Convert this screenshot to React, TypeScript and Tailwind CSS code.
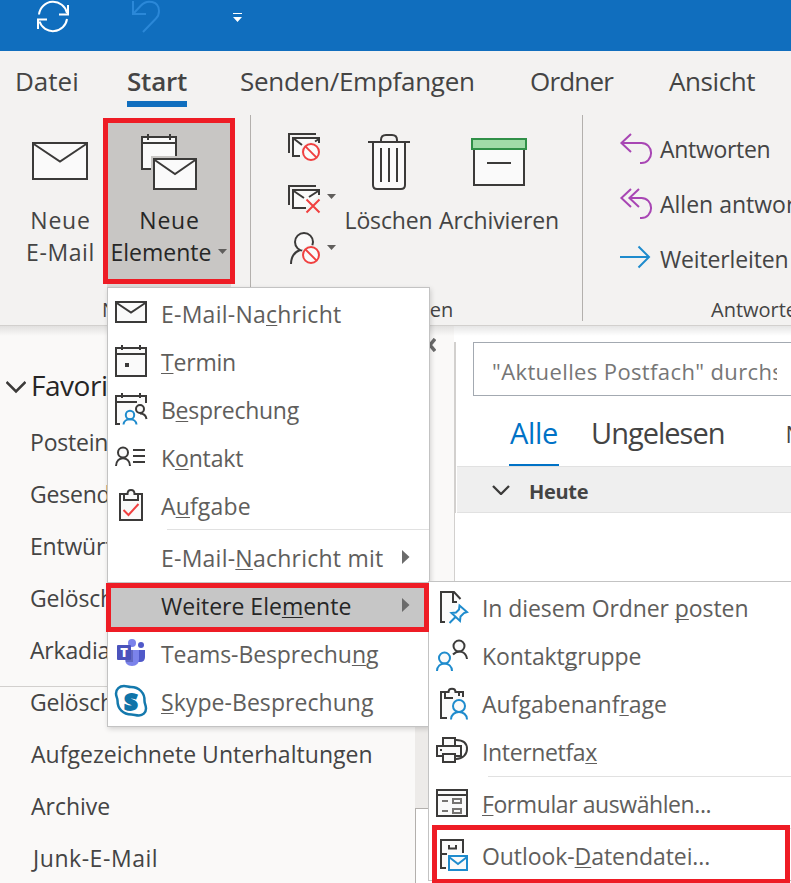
import { ReactNode } from 'react';
import clsx from 'clsx';

const DARK = '#3b3a39';
const BLUE = '#1e8bcd';
const RED = '#f04040';
const PURPLE = '#a846b4';

interface IconProps {
  children: ReactNode;
  w?: number;
  h?: number;
  className?: string;
}

const Icon = ({ children, w = 32, h = 32, className }: IconProps) => (
  <svg
    width={w}
    height={h}
    viewBox={`0 0 ${w} ${h}`}
    fill="none"
    stroke={DARK}
    strokeWidth={2}
    className={clsx('block shrink-0 overflow-visible', className)}
  >
    {children}
  </svg>
);

const DownArrow = ({ className }: { className?: string }) => (
  <svg width="9" height="5" viewBox="0 0 9 5" className={clsx('block shrink-0', className)}>
    <path d="M0 0H9L4.500 5Z" fill="#605e5c" />
  </svg>
);

/* ---------- ribbon icons ---------- */

const NewMailIcon = () => (
  <Icon w={56} h={56}>
    <rect x="1" y="9" width="54" height="36" fill="#fafafa" />
    <path d="M1 9.500L28 27.500L55 9.500" />
  </Icon>
);

const NewItemsIcon = () => (
  <Icon w={56} h={56}>
    <rect x="1" y="3" width="34" height="32" fill="#fafafa" />
    <path d="M1 9H35M7 0V6M29 0V6" />
    <rect x="10" y="22" width="48" height="36" fill="#c8c6c4" stroke="none" />
    <rect x="13" y="25" width="42" height="30" fill="#fafafa" />
    <path d="M13 25.500L34 40L55 25.500" />
  </Icon>
);

const TrashIcon = () => (
  <Icon w={42} h={56}>
    <path d="M5 8V51Q5 55 9 55H33Q37 55 37 51V8" fill="#fafafa" />
    <path d="M0 8H42M13 8V6Q13 1 18 1H24Q29 1 29 6V8M13 14V48M21 14V48M29 14V48" />
  </Icon>
);

const ArchiveIcon = () => (
  <Icon w={56} h={56}>
    <rect x="3" y="10" width="50" height="41" fill="#fafafa" />
    <rect x="1" y="5" width="54" height="10" fill="#a0dca8" stroke="#309048" />
    <path d="M16 29H40" />
  </Icon>
);

const Blocked = ({ cx, cy }: { cx: number; cy: number }) => (
  <>
    <circle cx={cx} cy={cy} r="10" fill="#f3f2f1" stroke="none" />
    <circle cx={cx} cy={cy} r="8" fill="#fafafa" stroke={RED} />
    <path d={`M${cx - 5.6} ${cy - 5.6}L${cx + 5.6} ${cy + 5.6}`} stroke={RED} />
  </>
);

const IgnoreIcon = () => (
  <Icon>
    <path d="M28 1H1V20" />
    <path d="M12 23H5V5H31V10" fill="#fafafa" />
    <path d="M5 5L14 12M27 8.500L31 6" />
    <Blocked cx={23} cy={19} />
  </Icon>
);

const CleanUpIcon = () => (
  <Icon>
    <path d="M28 1H1V20" />
    <path d="M18 23H5V5H31V10" fill="#fafafa" />
    <path d="M5 5.500L16 13M21 12L31 5.500" />
    <path d="M18.500 14.500L31.500 27.500M31.500 14.500L18.500 27.500" stroke={RED} />
  </Icon>
);

const JunkIcon = () => (
  <Icon>
    <circle cx="16" cy="10" r="9" fill="#fafafa" />
    <path d="M3 32C3 24 7 20 12 18" />
    <Blocked cx={23} cy={23} />
  </Icon>
);

const ReplyIcon = () => (
  <Icon>
    <path d="M11 1L1.400 10L11 19M1 10H21.500A9.600 10 0 0 1 21.500 30H20" stroke={PURPLE} />
  </Icon>
);

const ReplyAllIcon = () => (
  <Icon>
    <path d="M11 1L1.400 10L11 19M19 1L9.400 10L19 19M9 10H21.500A9.600 10 0 0 1 21.500 30H20" stroke={PURPLE} />
  </Icon>
);

const ForwardIcon = () => (
  <Icon>
    <path d="M0 14H29M18.500 3.500L29 14L18.500 24.500" stroke={BLUE} />
  </Icon>
);

/* ---------- menu icons ---------- */

const MailIcon = () => (
  <Icon>
    <rect x="1" y="6" width="30" height="20" fill="#fafafa" />
    <path d="M1 6.500L16 16.500L31 6.500" />
  </Icon>
);

const CalendarIcon = () => (
  <Icon>
    <rect x="1" y="4" width="30" height="28" fill="#fafafa" />
    <path d="M1 10H31M7 1V6M25 1V6" />
    <rect x="10" y="19" width="4" height="4" fill={DARK} stroke="none" />
  </Icon>
);

const MeetingIcon = () => (
  <Icon>
    <path d="M1 4H31V12H20L8 32H1Z" fill="#fafafa" stroke="none" />
    <path d="M5 32H1V4H31V11M1 10H22M7 1V6M25 1V6" />
    <circle cx="25" cy="17" r="4" fill="#fafafa" />
    <path d="M25 21.500C29 21.500 31 24 31.500 27" />
    <circle cx="15" cy="23" r="4.200" fill="#fafafa" stroke={BLUE} />
    <path d="M8.500 32.500C9 25.500 21 25.500 21.500 32.500" stroke={BLUE} />
  </Icon>
);

const ContactIcon = () => (
  <Icon>
    <circle cx="8" cy="12.500" r="5" fill="#fafafa" />
    <path d="M1 26C1 15.500 15 15.500 15 26M18 10H30M18 16H30M18 22H30" />
  </Icon>
);

const TaskIcon = () => (
  <Icon>
    <rect x="5" y="6" width="22" height="26" fill="#fafafa" />
    <path d="M9 6V12H23V6H19.500C19.500 0.500 12.500 0.500 12.500 6Z" fill="#fafafa" />
    <path d="M8.500 22L13.500 27L23.500 16" stroke={RED} />
  </Icon>
);

const TeamsIcon = () => (
  <Icon>
    <g stroke="none">
      <circle cx="26" cy="9" r="3" fill="#5059c9" />
      <circle cx="17" cy="7" r="4" fill="#7b83eb" />
      <path d="M22 14H30V21Q30 26 25 26H22Z" fill="#5059c9" />
      <path d="M10 14H24V23Q24 30 17 30Q10 30 10 23Z" fill="#7b83eb" />
      <path d="M10 14H18V26H11Z" fill="#444791" opacity="0.450" />
      <rect x="2" y="9" width="14" height="15" rx="1" fill="#4b53bc" />
      <text x="9" y="21" textAnchor="middle" fill="#fff" fontSize="13" fontWeight="800" fontFamily="Open Sans, sans-serif">
        T
      </text>
    </g>
  </Icon>
);

const SkypeIcon = () => (
  <Icon>
    <path
      d="M9 2C12 2 13 3 16 3C24 3 30 9 29.500 17C29.500 20 31 21 31 24.500C31 29 27.500 31.500 24 31.500C20.500 31.500 19.500 30.500 16.500 30.500C8 30.500 2.500 25 2.500 16.500C2.500 14 1 12.500 1 9.500C1 5 4.500 2 9 2Z"
      fill="#fff"
      stroke="#1479ad"
      strokeWidth="2.500"
    />
    <text x="16" y="25.500" textAnchor="middle" fill="#0f74a8" stroke="#0f74a8" strokeWidth="1.800" fontSize="23" fontWeight="800" fontFamily="Open Sans, sans-serif">
      S
    </text>
  </Icon>
);

const PostIcon = () => (
  <Icon>
    <path d="M5 1H18L24 8L12 32H5Z" fill="#fafafa" stroke="none" />
    <path d="M9 31H5V1H18L24.500 8M17 1V11H21" />
    <path
      d="M23.500 14.500L31 21L28 22L24.500 25.500L24 30L15.500 22L20 21.500L23 18.500ZM19.500 26L13.500 32"
      fill="#fafafa"
      stroke={BLUE}
    />
  </Icon>
);

const ContactGroupIcon = () => (
  <Icon>
    <circle cx="23" cy="7" r="5.500" fill="#fafafa" />
    <path d="M17 15.500C22 10.500 30 12 31 20" />
    <circle cx="8.500" cy="19" r="5.500" fill="#fafafa" stroke={BLUE} />
    <path d="M1 32C1 22 16 22 16 32" stroke={BLUE} />
  </Icon>
);

const TaskRequestIcon = () => (
  <Icon>
    <path d="M5 5H27V12L14 32H5Z" fill="#fafafa" stroke="none" />
    <path d="M11 31H5V5H12.500C12.500 0.500 19.500 0.500 19.500 5H27V10M9 5V11H17M23 5V9" />
    <circle cx="23" cy="19" r="6" fill="#fafafa" stroke={BLUE} />
    <path d="M15 32.500C15 22.500 31 22.500 31 32.500" stroke={BLUE} />
  </Icon>
);

const FaxIcon = () => (
  <Icon>
    <path d="M20 5C28 5 31 9 31 14C31 19 27 24 20 24" />
    <rect x="7" y="3" width="12" height="8" fill="#fafafa" />
    <rect x="1" y="11" width="24" height="10" fill="#fafafa" />
    <rect x="7" y="19" width="12" height="8" fill="#fafafa" />
    <rect x="4" y="14" width="2" height="2" fill={DARK} stroke="none" />
  </Icon>
);

const FormIcon = () => (
  <Icon>
    <rect x="1" y="3" width="30" height="26" fill="#fafafa" />
    <path d="M1 8H31" />
    <path d="M6 14H12M6 24H12" stroke="#767472" />
    <rect x="17" y="12" width="8" height="4" stroke="#767472" />
    <rect x="17" y="22" width="8" height="4" stroke="#767472" />
  </Icon>
);

const DataFileIcon = () => (
  <Icon>
    <path d="M5 1H27V15H11V29H5Z" fill="#fafafa" stroke="none" />
    <path d="M10 29H5V1H27V14M5 15H11M13 6V9.500H20V6" />
    <rect x="13" y="17" width="18" height="14" fill="#fafafa" stroke={BLUE} />
    <path d="M13 18L22 25L31 18" stroke={BLUE} />
  </Icon>
);

/* ---------- menus ---------- */

interface MenuItemProps {
  icon?: ReactNode;
  children: ReactNode;
  className?: string;
  selected?: boolean;
  hasSub?: boolean;
}

const MenuItem = ({ icon, children, className, selected, hasSub }: MenuItemProps) => (
  <div
    className={clsx(
      'flex h-12 shrink-0 pl-[7px] text-[23px] whitespace-nowrap',
      selected ? 'bg-[#c6c6c6] text-[#262626]' : 'text-[#605e5c]'
    )}
  >
    <div className="mt-[6px] mr-[14px] h-8 w-8 shrink-0">{icon}</div>
    <span className={className}>{children}</span>
    {hasSub && (
      <svg width="8" height="14" viewBox="0 0 8 14" className="mt-[16px] mr-[19px] ml-auto block">
        <path d="M0 0L7.500 7L0 14Z" fill="#6b6b6b" />
      </svg>
    )}
  </div>
);

const Key = ({ children }: { children: string }) => (
  <span className="underline decoration-1 underline-offset-[2px] [text-decoration-skip-ink:none]">{children}</span>
);

const MenuLine = () => <div className="mt-[-1px] mb-1 ml-[59px] h-px shrink-0 bg-[#e1e1e1]" />;

const NewItemsMenu = () => (
  <div className="absolute top-[287px] left-[107px] flex h-[440px] w-[323px] flex-col border border-[#c3c3c3] bg-white pt-[2px] leading-[48px] shadow-[1px_2px_5px_rgba(0,0,0,0.16)]">
    <MenuItem icon={<MailIcon />} className="tracking-[0.25px]">E-Mail-Na<Key>c</Key>hricht</MenuItem>
    <MenuItem icon={<CalendarIcon />} className="tracking-[-0.2px]"><Key>T</Key>ermin</MenuItem>
    <MenuItem icon={<MeetingIcon />} className="tracking-[-0.28px]">B<Key>e</Key>sprechung</MenuItem>
    <MenuItem icon={<ContactIcon />} className="tracking-[-0.15px]">K<Key>o</Key>ntakt</MenuItem>
    <MenuItem icon={<TaskIcon />} className="tracking-[0.15px]">A<Key>u</Key>fgabe</MenuItem>
    <MenuLine />
    <MenuItem hasSub className="tracking-[0.24px]">E-Mail-<Key>N</Key>achricht mit</MenuItem>
    <MenuItem selected hasSub>Weitere Ele<Key>m</Key>ente</MenuItem>
    <MenuItem icon={<TeamsIcon />} className="tracking-[-0.1px]">Teams-Besprechu<Key>n</Key>g</MenuItem>
    <MenuItem icon={<SkypeIcon />} className="tracking-[0.06px]"><Key>S</Key>kype-Besprechung</MenuItem>
  </div>
);

const MoreItemsMenu = () => (
  <div className="absolute top-[581px] left-[428px] flex h-[300px] w-[380px] flex-col border border-[#c3c3c3] bg-white pt-[3px] leading-[46px]">
    <MenuItem icon={<PostIcon />} className="tracking-[-0.08px]">In diesem Ordner <Key>p</Key>osten</MenuItem>
    <MenuItem icon={<ContactGroupIcon />} className="tracking-[-0.08px]">Kontakt<Key>g</Key>ruppe</MenuItem>
    <MenuItem icon={<TaskRequestIcon />}>Aufgabenanf<Key>r</Key>age</MenuItem>
    <MenuItem icon={<FaxIcon />} className="tracking-[-0.35px]">Internetfa<Key>x</Key></MenuItem>
    <MenuLine />
    <MenuItem icon={<FormIcon />} className="tracking-[-0.42px]"><Key>F</Key>ormular auswählen...</MenuItem>
    <MenuLine />
    <MenuItem icon={<DataFileIcon />} className="tracking-[-0.07px]">Outlook-<Key>D</Key>atendatei...</MenuItem>
  </div>
);

/* ---------- window parts ---------- */

const TitleBar = () => (
  <div className="flex h-[51px] shrink-0 bg-[#106ebe]">
    <Icon className="mt-[1px] ml-[37px]">
      <g stroke="#fff">
        <path d="M2 13.500A14.200 14.200 0 0 1 30 12M31 4V13.500H22" />
        <path d="M30 18A14.200 14.200 0 0 1 2.500 20.500M1 28V18.500H10" />
      </g>
    </Icon>
    <Icon className="ml-[63px]">
      <path d="M1 1V14H14M1 14L9 5.500C15 -1 27 1 27 11C27 14.500 26 16.500 24 18.500L11 32" stroke="#2b88d8" />
    </Icon>
    <svg width="9" height="10" viewBox="0 0 9 10" className="mt-[13px] ml-[69px]">
      <path d="M0 0H9V1H0ZM0 4H9L4.500 9Z" fill="#fff" />
    </svg>
  </div>
);

const Tabs = () => (
  <div className="flex h-[56px] shrink-0 pl-[15px] text-[26px] leading-[39px] text-[#444]">
    <div className="w-[112px] pt-[11px]">Datei</div>
    <div className="w-[113px]">
      <div className="h-[56px] w-[60px] border-b-[6px] border-[#106ebe] pt-[11px] font-semibold tracking-[-0.2px]">Start</div>
    </div>
    <div className="w-[290px] pt-[11px] tracking-[-0.27px]">Senden/Empfangen</div>
    <div className="w-[139px] pt-[11px] tracking-[-0.8px]">Ordner</div>
    <div className="pt-[11px] tracking-[-0.4px]">Ansicht</div>
  </div>
);

const Separator = () => <div className="mt-2 h-[206px] w-px shrink-0 bg-[#b3b0ad]" />;

const Ribbon = () => (
  <div className="flex h-[219px] shrink-0 border-b border-[#d2d0ce] text-[23px] leading-8 whitespace-nowrap text-[#444]">
    <div className="w-[250px] shrink-0">
      <div className="flex pt-[11px] pl-[17px]">
        <div className="flex h-[166px] w-[86px] flex-col items-center pt-[16px]">
          <NewMailIcon />
          <span className="mt-[14px] ml-[1px] tracking-[0.8px]">Neue</span>
          <span className="ml-[1px] tracking-[0.6px]">E-Mail</span>
        </div>
        <div className="flex h-[166px] w-[132px] flex-col items-center border-[5px] border-[#ee1c25] bg-[#c8c6c4] pt-[11px] text-[#262626]">
          <NewItemsIcon />
          <span className="mt-[14px] ml-[1px] tracking-[0.8px]">Neue</span>
          <div className="flex items-center gap-[7px]">
            <span>Elemente</span>
            <DownArrow className="mt-[-2px]" />
          </div>
        </div>
      </div>
      <div className="mt-[16px] pl-[102px] text-[20px] leading-[20px]">Neu</div>
    </div>
    <Separator />
    <div className="w-[331px] shrink-0">
      <div className="flex h-[177px] pl-[37px]">
        <div className="flex w-[54px] flex-col pt-[26px]">
          <IgnoreIcon />
          <div className="mt-5 flex gap-[7px]">
            <CleanUpIcon />
            <DownArrow className="mt-[9px]" />
          </div>
          <div className="mt-[15px] flex gap-[7px]">
            <JunkIcon />
            <DownArrow className="mt-[13px]" />
          </div>
        </div>
        <div className="flex w-[93px] flex-col items-center pt-[27px]">
          <TrashIcon />
          <span className="mt-[14px] tracking-[-0.14px]">Löschen</span>
        </div>
        <div className="flex w-[128px] flex-col items-center pt-[27px]">
          <ArchiveIcon />
          <span className="mt-[14px] tracking-[-0.14px]">Archivieren</span>
        </div>
      </div>
      <div className="mt-[16px] pl-[125px] text-[20px] leading-[20px]">Löschen</div>
    </div>
    <Separator />
    <div className="shrink-0 pl-[37px]">
      <div className="flex h-[193px] flex-col pt-[15px] leading-[55px]">
        <div className="flex h-[55px] gap-2">
          <div className="pt-[11px]"><ReplyIcon /></div>
          <span className="tracking-[-0.3px]">Antworten</span>
        </div>
        <div className="flex h-[55px] gap-2">
          <div className="pt-[11px]"><ReplyAllIcon /></div>
          <span>Allen antworten</span>
        </div>
        <div className="flex h-[55px] gap-2">
          <div className="pt-[11px]"><ForwardIcon /></div>
          <span className="tracking-[-0.15px]">Weiterleiten</span>
        </div>
      </div>
      <div className="pl-[91px] text-[20px] leading-[20px]">Antworten</div>
    </div>
  </div>
);

const folders = ['Posteingang', 'Gesendete', 'Entwürfe', 'Gelöschte', 'Arkadia', 'Gelöschte'];

const Sidebar = () => (
  <div className="relative flex w-[454px] shrink-0 bg-[#faf9f8] text-[#444]">
    <div className="w-[415px] shrink-0 pt-8 text-[23px] whitespace-nowrap">
      <div className="flex h-[58px] pl-[6px] text-[28px] leading-[54px] text-[#262626]">
        <svg width="20" height="56" viewBox="0 0 20 56" fill="none" stroke={DARK} strokeWidth="2.500">
          <path d="M0.500 24L10 33.500L19.500 24" />
        </svg>
        <span className="ml-[5px] tracking-[-0.46px]">Favoriten</span>
      </div>
      <div className="pl-[30px] leading-[52px] tracking-[-0.2px]">
        {folders.map((name, i) => (
          <div key={i} className="h-[52px]">{name}</div>
        ))}
      </div>
      <div className="pl-[31px] leading-[52px]">
        <div className="h-[52px] tracking-[0.04px]">Aufgezeichnete Unterhaltungen</div>
        <div className="h-[52px]">Archive</div>
        <div className="h-[52px] pl-[2px] tracking-[0.55px]">Junk-E-Mail</div>
      </div>
    </div>
    <div className="flex grow flex-col pt-[255px]">
      <div className="h-[227px] bg-[#edebe9]" />
      <div className="grow border-t border-l border-[#b3b0ad] bg-white" />
    </div>
    <div className="absolute top-[360px] left-0 h-px w-[107px] bg-[#d2d0ce]" />
    {/* pane collapse chevron, mostly hidden by the open menu */}
    <svg width="12" height="14" viewBox="0 0 12 14" className="absolute top-[12px] left-[424px]">
      <path d="M11 1L6 7L11 13" fill="none" stroke="#6b6b6b" strokeWidth="3.500" />
    </svg>
  </div>
);

const MessageList = () => (
  <div className="relative flex min-w-0 grow bg-white">
    <div className="w-[3px] shrink-0 pt-4">
      <div className="h-[171px] w-[2px] bg-[#d2d0ce]" />
      <div className="h-[80px] w-px bg-[#d2d0ce]" />
    </div>
    <div className="min-w-0 grow pt-4 whitespace-nowrap">
      <div className="ml-4 h-[54px] w-[340px] border border-[#a3a9b1] pl-[18px]">
        <div className="w-[285px] overflow-hidden text-[22px] leading-[56px] tracking-[0.38px] text-[#767676]">
          &quot;Aktuelles Postfach&quot; durchsuchen
        </div>
      </div>
      <div className="flex h-[70px] pl-[52px] text-[29px] leading-[74px] text-[#444]">
        <div className="h-[70px] w-[50px] shrink-0 border-b-2 border-[#0072c6] pl-[1px] tracking-[-0.3px] text-[#0072c6]">Alle</div>
        <span className="ml-[32px] tracking-[-1px]">Ungelesen</span>
        <span className="ml-[61px] text-[23px] leading-[77px]">Nach Datum</span>
      </div>
      <div className="flex h-[47px] items-start border-y border-[#e1e1e1] bg-[#efefef] pl-[35px]">
        <svg width="18" height="10" viewBox="0 0 18 10" fill="none" stroke={DARK} strokeWidth="2.300" className="mt-[18px]">
          <path d="M1 1L9 9L17 1" />
        </svg>
        <span className="ml-[19px] text-[20px] leading-[49px] font-bold tracking-[-0.3px] text-[#444]">Heute</span>
      </div>
    </div>
  </div>
);

export default function App() {
  return (
    <div className="relative flex h-[883px] w-[791px] flex-col overflow-hidden bg-[#f3f2f1] font-['Open_Sans',sans-serif]">
      <TitleBar />
      <Tabs />
      <Ribbon />
      <div className="flex min-h-0 grow">
        <Sidebar />
        <MessageList />
      </div>
      <div className="absolute top-[326px] left-0 h-[10px] w-full bg-linear-to-b from-black/10 to-transparent" />
      <div className="absolute top-[284px] left-[107px] h-[3px] w-[124px] bg-[#dddbd9]" />

      <NewItemsMenu />
      <MoreItemsMenu />

      {/* highlight frames */}
      <div className="absolute top-[583px] left-[106px] h-[49px] w-[323px] border-[5px] border-[#ee1c25]" />
      <div className="absolute top-[825px] left-[432px] h-[59px] w-[358px] border-[5px] border-[#ee1c25]" />
    </div>
  );
}
